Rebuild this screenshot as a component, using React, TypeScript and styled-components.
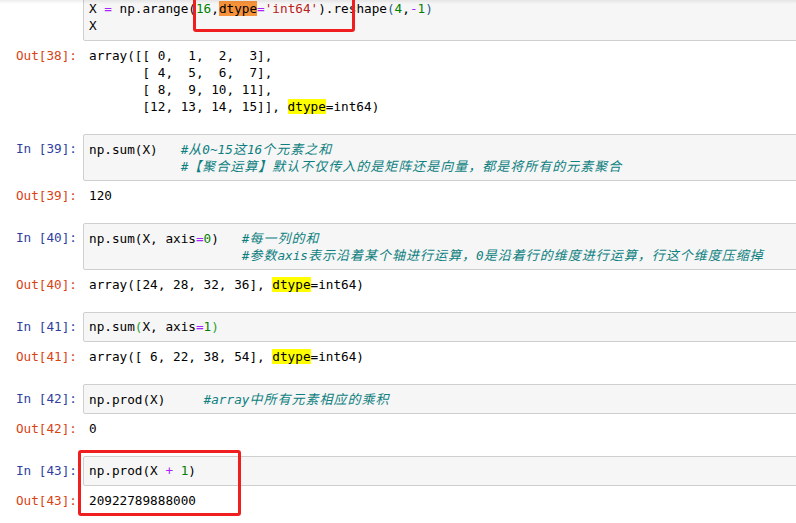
import React from "react";
import styled, { createGlobalStyle } from "styled-components";

const GlobalStyle = createGlobalStyle`
  html, body {
    margin: 0;
    padding: 0;
    background: #fff;
    overflow: hidden;
  }
  body {
    width: 796px;
    height: 523px;
  }
`;

const Page = styled.div`
  position: relative;
  display: flow-root;
  width: 796px;
  height: 523px;
  overflow: hidden;
`;

const Notebook = styled.div`
  width: 860px;
  margin-top: -6px;
  font-family: "DejaVu Sans Mono", "Liberation Mono", "Noto Sans CJK SC", monospace;
  font-size: 12.7px;
  color: #000;
`;

const Cell = styled.div`
  display: flex;
  flex-direction: column;
  gap: 6px;
  margin-bottom: 19px;
`;

const Row = styled.div`
  display: flex;
  align-items: flex-start;
`;

// the first cell is scrolled half out of view, its "In" prompt is cut off
const Prompt = styled.div<{ $out?: boolean; $hidden?: boolean }>`
  flex: none;
  width: 77px;
  margin-right: 6px;
  padding-top: ${(p) => (p.$out ? 0 : 6)}px;
  text-align: right;
  line-height: 17px;
  white-space: pre;
  visibility: ${(p) => (p.$hidden ? "hidden" : "visible")};
  color: ${(p) => (p.$out ? "#d84315" : "#303f9f")};
`;

const InputArea = styled.div`
  flex: 1;
  background: #f6f6f6;
  border: 1px solid #cfcfcf;
  border-radius: 2px;
  padding: 5px 5px 6px;
`;

const OutputArea = styled.div`
  flex: 1;
  padding-left: 6px;
`;

const Line = styled.div`
  height: 17px;
  line-height: 17px;
  white-space: pre;
`;

const Op = styled.span`
  color: #aa22ff;
`;

const Num = styled.span`
  color: #008000;
`;

const Str = styled.span`
  color: #ba2121;
`;

const Paren = styled.span<{ $tone: "match" | "blue" }>`
  color: ${(p) => (p.$tone === "match" ? "#2ca02c" : "#2a5d8c")};
`;

const Mark = styled.span<{ $color: string }>`
  background: ${(p) => p.$color};
`;

const CommentText = styled.span`
  color: #0e7f7f;
  font-style: italic;
`;

const Wide = styled.span`
  font-family: "Noto Sans CJK SC", sans-serif;
  font-size: 13px;
  letter-spacing: 1px;
  line-height: 17px;
`;

const Annotation = styled.div<{ $x: number; $y: number; $w: number; $h: number }>`
  position: absolute;
  left: ${(p) => p.$x}px;
  top: ${(p) => p.$y}px;
  width: ${(p) => p.$w}px;
  height: ${(p) => p.$h}px;
  box-sizing: border-box;
  border: 3px solid #f01e1e;
  border-radius: 3px;
  pointer-events: none;
`;

const TopShade = styled.div`
  position: absolute;
  left: 0;
  top: 0;
  right: 0;
  height: 4px;
  background: linear-gradient(rgba(0, 0, 0, 0.07), rgba(0, 0, 0, 0));
`;

const Comment = ({ text }: { text: string }) => (
  <CommentText>
    {text.split(/([\u3000-\u303f\u4e00-\u9fff\uff00-\uffef]+)/).map((part, i) =>
      i % 2 === 1 ? <Wide key={i}>{part}</Wide> : part
    )}
  </CommentText>
);

interface CellProps {
  n: number;
  input: React.ReactNode[];
  output: React.ReactNode[];
  cutOff?: boolean;
}

const NotebookCell = ({ n, input, output, cutOff }: CellProps) => (
  <Cell>
    <Row>
      <Prompt $hidden={cutOff}>{`In [${n}]:`}</Prompt>
      <InputArea>
        {input.map((l, i) => (
          <Line key={i}>{l}</Line>
        ))}
      </InputArea>
    </Row>
    <Row>
      <Prompt $out>{`Out[${n}]:`}</Prompt>
      <OutputArea>
        {output.map((l, i) => (
          <Line key={i}>{l}</Line>
        ))}
      </OutputArea>
    </Row>
  </Cell>
);

const yellowDtype = <Mark $color="#ffff00">dtype</Mark>;

export default function App() {
  return (
    <Page>
      <GlobalStyle />
      <Notebook>
        <NotebookCell
          n={38}
          cutOff
          input={[
            <>
              X <Op>=</Op> np.arange(<Num>16</Num>,<Mark $color="#f5923a">dtype</Mark>
              <Op>=</Op>
              <Str>'int64'</Str>).reshape<Paren $tone="blue">(</Paren>
              <Num>4</Num>,<Op>-</Op>
              <Num>1</Num>
              <Paren $tone="blue">)</Paren>
            </>,
            "X",
          ]}
          output={[
            "array([[ 0,  1,  2,  3],",
            "       [ 4,  5,  6,  7],",
            "       [ 8,  9, 10, 11],",
            <>       [12, 13, 14, 15]], {yellowDtype}=int64)</>,
          ]}
        />
        <NotebookCell
          n={39}
          input={[
            <>
              np.sum(X){"   "}
              <Comment text="#从0~15这16个元素之和" />
            </>,
            <>
              {"            "}
              <Comment text="#【聚合运算】默认不仅传入的是矩阵还是向量，都是将所有的元素聚合" />
            </>,
          ]}
          output={["120"]}
        />
        <NotebookCell
          n={40}
          input={[
            <>
              np.sum(X, axis<Op>=</Op>
              <Num>0</Num>){"   "}
              <Comment text="#每一列的和" />
            </>,
            <>
              {"                    "}
              <Comment text="#参数axis表示沿着某个轴进行运算，0是沿着行的维度进行运算，行这个维度压缩掉" />
            </>,
          ]}
          output={[<>array([24, 28, 32, 36], {yellowDtype}=int64)</>]}
        />
        <NotebookCell
          n={41}
          input={[
            <>
              np.sum<Paren $tone="match">(</Paren>X, axis<Op>=</Op>
              <Num>1</Num>
              <Paren $tone="match">)</Paren>
            </>,
          ]}
          output={[<>array([ 6, 22, 38, 54], {yellowDtype}=int64)</>]}
        />
        <NotebookCell
          n={42}
          input={[
            <>
              np.prod(X){"     "}
              <Comment text="#array中所有元素相应的乘积" />
            </>,
          ]}
          output={["0"]}
        />
        <NotebookCell
          n={43}
          input={[
            <>
              np.prod(X <Op>+</Op> <Num>1</Num>)
            </>,
          ]}
          output={["20922789888000"]}
        />
      </Notebook>
      <TopShade />
      <Annotation $x={193} $y={-10} $w={162} $h={42} />
      <Annotation $x={78} $y={450} $w={163} $h={66} />
    </Page>
  );
}
